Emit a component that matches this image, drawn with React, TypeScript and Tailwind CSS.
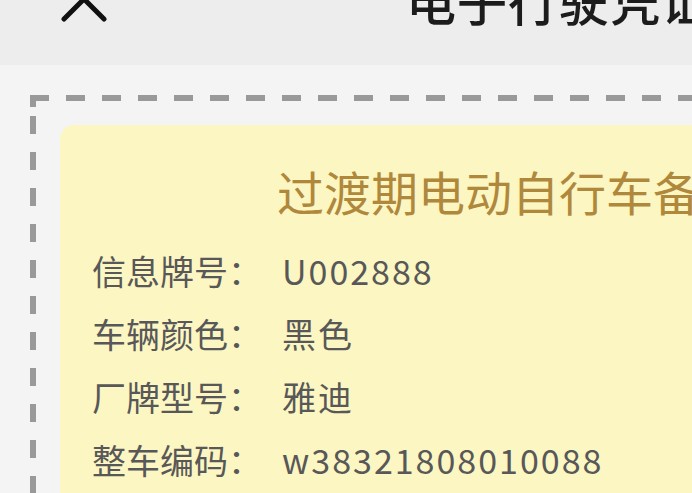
import React from "react";

const rows: [string, string][] = [
  ["信息牌号：", "U002888"],
  ["车辆颜色：", "黑色"],
  ["厂牌型号：", "雅迪"],
  ["整车编码：", "w38321808010088"],
  ["备案日期：", "2019-04-15"],
];

function DashedFrame() {
  return (
    <svg className="absolute inset-0 w-full h-full pointer-events-none" aria-hidden="true">
      <line x1="0" y1="3" x2="100%" y2="3" stroke="#999999" strokeWidth="6" strokeDasharray="19 17" />
      <line x1="3" y1="0" x2="3" y2="12" stroke="#999999" strokeWidth="6" />
      <line x1="3" y1="21" x2="3" y2="100%" stroke="#999999" strokeWidth="6" strokeDasharray="18 18" />
    </svg>
  );
}

export default function App() {
  return (
    <div
      className="w-[692px] h-[493px] overflow-hidden bg-[#f4f4f4]"
      style={{ fontFamily: '"Noto Sans CJK SC", "Noto Sans", sans-serif' }}
    >
      <div className="w-[1000px]">
        {/* header */}
        <div className="h-[65px] overflow-hidden bg-[#ededed]">
          <div className="-mt-[66px] h-[130px] flex items-center">
            <svg
              width="48"
              height="48"
              viewBox="0 0 48 48"
              className="ml-[60px] shrink-0"
            >
              <path
                d="M4 4 L44 44 M44 4 L4 44"
                stroke="#111"
                strokeWidth="5"
                strokeLinecap="round"
                fill="none"
              />
            </svg>
            <div className="ml-[298px] text-[50px] leading-none font-medium text-[#1c1c1c] tracking-[1px] whitespace-nowrap">
              电子行驶凭证
            </div>
          </div>
        </div>
        {/* content */}
        <div className="pt-[30px] pl-[30px]">
          <div className="relative p-[30px]">
            <DashedFrame />
            <div className="bg-[#fcf6c2] rounded-[14px] pt-[42px] pl-[32px] pb-[40px]">
              <div className="pl-[185px] text-[47px] leading-none text-[#b0883c] whitespace-nowrap">
                过渡期电动自行车备案凭证
              </div>
              <div className="mt-[25px] flex flex-col">
                {rows.map(([k, v]) => (
                  <div key={k} className="flex items-center h-[63px] text-[34px] text-[#585858]">
                    <div className="w-[190px] shrink-0 whitespace-nowrap">{k}</div>
                    <div className="whitespace-nowrap tracking-[2px]">{v}</div>
                  </div>
                ))}
              </div>
            </div>
          </div>
        </div>
      </div>
    </div>
  );
}
